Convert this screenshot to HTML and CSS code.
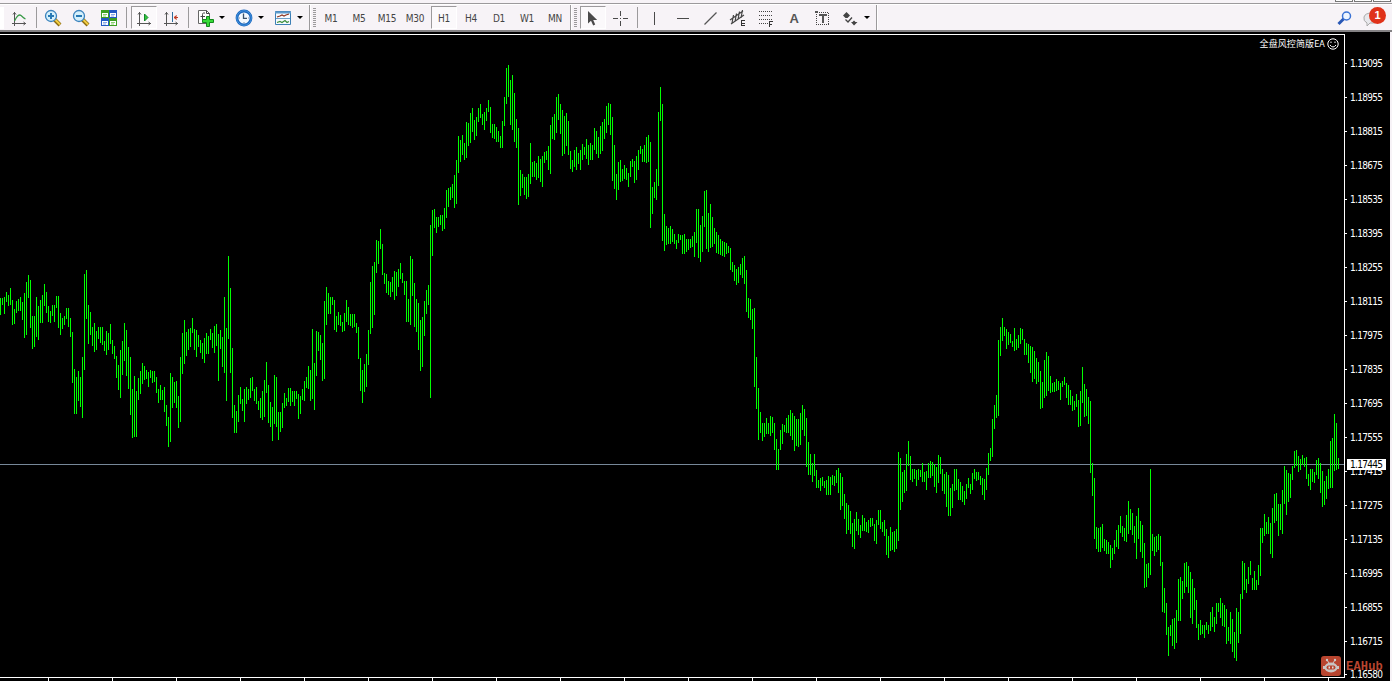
FILE: index.html
```
<!DOCTYPE html>
<html lang="zh-CN">
<head>
    <meta charset="UTF-8">
    <title>H1 Chart</title>
    <link rel="stylesheet" href="styles.css">
</head>
<body>
    <div class="window-strip"><i></i><i></i><i></i></div>
    <header class="toolbar">
        <div class="group group-charts">
            <span class="pressed-edge"></span>
            <button class="tool"><svg width="16" height="16" viewBox="0 0 16 16"><path class="axis" d="M3.500 2v14M1 13.500h14M2 4.500l1.500-2L5 4.500M12.500 12l2 1.500-2 1.500"/><path d="M3.500 11C6 6 8 4 10 5.500S13 8.500 14.500 9" fill="none" stroke="#3a9a48" stroke-width="1.300"/></svg></button>
            <span class="sep"></span>
            <button class="tool"><svg width="18" height="18" viewBox="0 0 18 18"><path d="M10.500 10.500l5.500 5.500" stroke="#8a6a10" stroke-width="4"/><path d="M10.500 10l5.500 5.500" stroke="#f3cd42" stroke-width="2"/><circle cx="7" cy="7" r="5.500" fill="#d5f0fc" stroke="#3b83bd" stroke-width="1.300"/><path d="M4 7h6M7 4v6" stroke="#2879b5" stroke-width="2"/></svg></button>
            <button class="tool"><svg width="18" height="18" viewBox="0 0 18 18"><path d="M10.500 10.500l5.500 5.500" stroke="#8a6a10" stroke-width="4"/><path d="M10.500 10l5.500 5.500" stroke="#f3cd42" stroke-width="2"/><circle cx="7" cy="7" r="5.500" fill="#d5f0fc" stroke="#3b83bd" stroke-width="1.300"/><path d="M4 7h6" stroke="#2879b5" stroke-width="2"/></svg></button>
            <button class="tool"><svg width="16" height="16" viewBox="0 0 16 16"><path fill="#3c9f22" d="M0 0h8v8H0zM8 8h8v8H8z"/><path fill="#2459c4" d="M8 0h8v8H8zM0 8h8v8H0z"/><path fill="#fff" d="M1 3h6v4H1zM9 3h6v4H9zM1 11h6v4H1zM9 11h6v4H9z"/><path stroke="#8bd06f" d="M2 4.500h4M2 6h3M10 12.500h4M10 14h3"/><path stroke="#89a9e8" d="M10 4.500h4M10 6h3M2 12.500h4M2 14h3"/></svg></button>
            <span class="sep"></span>
            <button class="tool pressed"><svg width="16" height="16" viewBox="0 0 16 16"><path class="axis" d="M3.500 2v14M1 13.500h14M2 4.500l1.500-2L5 4.500M12.500 12l2 1.500-2 1.500"/><path d="M8.500 4v7L12 7.500z" fill="#2fc83a" stroke="#14852a"/></svg></button>
            <button class="tool"><svg width="16" height="16" viewBox="0 0 16 16"><path class="axis" d="M3.500 2v14M1 13.500h14M2 4.500l1.500-2L5 4.500M12.500 12l2 1.500-2 1.500"/><path d="M9.500 2v10" stroke="#2d6c9c"/><path d="M11 7.500h4M13.500 5.500L11 7.500l2.500 2" stroke="#c23a22" fill="#c23a22"/></svg></button>
            <span class="sep"></span>
            <button class="tool menu"><svg width="18" height="18" viewBox="0 0 18 18"><path d="M2.500 1.500h8l3 3v10h-11z" fill="#fff" stroke="#666"/><path d="M10.500 1.500v3h3M9 4H7.500Q6.500 4 6.500 5.500V12M4.500 7.500H9" fill="none" stroke="#444"/><path d="M10.500 7.500h3v3h4v3h-4v4h-3v-4h-4v-3h4z" fill="#36da37" stroke="#13881d"/></svg></button>
            <button class="tool menu"><svg width="18" height="18" viewBox="0 0 18 18"><circle cx="9" cy="9" r="7" fill="#f4f9ff" stroke="#1c67bd" stroke-width="2.800"/><circle cx="9" cy="9" r="7.300" fill="none" stroke="#54a5ed" stroke-width=".7"/><path d="M8.500 4.500v4.800H12" fill="none" stroke="#3a526a" stroke-width="1.300"/><path d="M4 9h1M13 9h1M9 13v1" stroke="#8092a5"/></svg></button>
            <button class="tool menu"><svg width="18" height="16" viewBox="0 0 18 16"><path d="M1.500 1.500h15v13h-15z" fill="#f7fbff" stroke="#3d7fb5"/><path d="M1 2.500h16" stroke="#5c9acb" stroke-width="2"/><path d="M2 8.500h14" stroke="#6c9fc7"/><path d="M3 7l3-1 2-1 2 1 2-1 3-1" fill="none" stroke="#8c3521" stroke-width="1.200"/><path d="M3 12.500l3-1 2 1 3-2 2 2 2-1" fill="none" stroke="#3d8d3b" stroke-width="1.200"/></svg></button>
        </div>
        <div class="group group-periods">
            <span class="grip"></span>
            <button class="tool">M1</button>
            <button class="tool">M5</button>
            <button class="tool">M15</button>
            <button class="tool">M30</button>
            <button class="tool pressed">H1</button>
            <button class="tool">H4</button>
            <button class="tool">D1</button>
            <button class="tool">W1</button>
            <button class="tool">MN</button>
        </div>
        <div class="group group-drawing">
            <span class="grip"></span>
            <button class="tool pressed"><svg width="18" height="18" viewBox="0 0 18 18"><path d="M4 2v12.500l3-2.700 2.200 4.700 2-1-2-4.400h4z" fill="#4a4a4a"/></svg></button>
            <button class="tool"><svg class="crisp" width="16" height="16" viewBox="0 0 16 16"><path d="M7.500 1v5M7.500 11v5M0 8.500h5M10 8.500h5M7 8.500h1" stroke="#4a4a4a"/></svg></button>
            <span class="sep"></span>
            <button class="tool"><svg class="crisp" width="16" height="16" viewBox="0 0 16 16"><path d="M8.500 2v13" stroke="#4a4a4a"/></svg></button>
            <button class="tool"><svg class="crisp" width="16" height="16" viewBox="0 0 16 16"><path d="M3 8.500h12" stroke="#4a4a4a"/></svg></button>
            <button class="tool"><svg width="16" height="16" viewBox="0 0 16 16"><path d="M2.500 14.500l12-12" stroke="#555" stroke-width="1.200"/></svg></button>
            <button class="tool"><svg width="18" height="18" viewBox="0 0 18 18"><path d="M1 11L14 2M2 15L15 6M4.500 6L3 14M7.500 4.500L6 12.500M10.500 2.500L9 10.500M13.500 1L12 9" stroke="#444" stroke-width="1.200"/><path class="crisp" d="M16 11.500h-4M12.500 11v6M12 14.500h3.500M12 16.500h4" stroke="#333"/></svg></button>
            <button class="tool"><svg class="crisp" width="18" height="18" viewBox="0 0 18 18"><path d="M2 2.500h14M2 6.500h14M2 10.500h14M2 14.500h9" stroke="#444" stroke-dasharray="1 1"/><path d="M12.500 12v6M12 12.500h4M12 15.500h3" stroke="#333"/></svg></button>
            <button class="tool letter">A</button>
            <button class="tool"><svg class="crisp" width="16" height="16" viewBox="0 0 16 16"><path d="M2.500 2.500h12v12h-12z" fill="none" stroke="#444" stroke-dasharray="1 1"/><path d="M1 1h3v2H1zM5 4h8v2H10v7H8V6H5z" fill="#555"/></svg></button>
            <button class="tool menu"><svg width="18" height="18" viewBox="0 0 18 18"><path d="M2 6.500L5.500 3 9 6.500 6.500 9h-2zM10 13h6.500L13 16.500zM11.500 13l1.500-1.500 1.500 1.500z" fill="#444"/><path d="M4.500 10.500l2.500 2.500 4-4.500" fill="none" stroke="#444" stroke-width="1.300"/></svg></button>
        </div>
        <div class="toolbar-end">
            <svg width="16" height="16" viewBox="0 0 16 16"><path d="M1.500 14l5.500-5.500" stroke="#2857b5" stroke-width="3"/><circle cx="9.500" cy="6" r="4" fill="#eef5ff" stroke="#3a72d4" stroke-width="1.500"/></svg>
            <span class="chat">
                <svg width="18" height="16" viewBox="0 0 18 16"><path d="M4 13Q0 11 1 7T9 3t7 5-6 5H7l-3 3z" fill="#e8e8ec" stroke="#aaa"/></svg>
                <b class="badge">1</b>
            </span>
        </div>
    </header>

    <main class="workspace">
        <section class="chart">
            <svg id="bars" width="1344" height="642" viewBox="0 35 1344 642"></svg>
            <div class="expert">全盘风控简版EA
                <svg width="12" height="12" viewBox="0 0 12 12"><circle cx="6" cy="6" r="5.200"/><path d="M3 7q3 4 6 0M4 3.500v1.500M8 3.500v1.500"/></svg>
            </div>
        </section>
        <aside class="prices" id="prices">
            <div class="current-price">1.17445</div>
        </aside>
        <div class="times"></div>
        <div class="watermark">
            <svg width="20" height="20" viewBox="0 0 20 20"><rect width="20" height="20" rx="3" fill="#b8452f"/><path d="M6 4l2 3M14 4l-2 3" stroke="#ccc"/><circle cx="6" cy="4" r="1.200" fill="#ccc"/><circle cx="14" cy="4" r="1.200" fill="#ccc"/><ellipse cx="10" cy="11.500" rx="6.500" ry="5" fill="#c9c5c3"/><path d="M2 10h2v3H2zM16 10h2v3h-2z" fill="#c9c5c3"/><rect x="5.500" y="9.500" width="9" height="4" rx="2" fill="#b8452f"/><path d="M7.500 10.500h1.500v2H7.500zM11 10.500h1.500v2H11z" fill="#ddd"/></svg>
            <span>EAHub</span>
        </div>
    </main>
    <script src="chart.js"></script>
</body>
</html>
```
FILE: styles.css
```
* {
    box-sizing: border-box;
}

body {
    margin: 0;
    width: 1392px;
    height: 681px;
    overflow: hidden;
    background: #f7f3f7;
    font-family: "DejaVu Sans Condensed", "DejaVu Sans", "Noto Sans CJK SC", sans-serif;
    font-size: 10px;
}

.window-strip {
    display: flex;
    justify-content: flex-end;
    height: 4px;
    border-bottom: 1px solid #9c9a9c;
}

.window-strip i {
    width: 18px;
    height: 2px;
    margin-right: 1px;
    background: #fff;
    border: 1px solid #777;
    border-top: 0;
}

.toolbar {
    display: flex;
    height: 28px;
    border-top: 1px solid #fff;
    border-bottom: 2px solid #848284;
}

.group {
    display: flex;
    align-items: center;
    border-right: 1px solid #9c9a9c;
    box-shadow: 1px 0 #fff;
}

.group-charts {
    width: 310px;
}

.group-periods {
    width: 261px;
}

.group-drawing {
    width: 306px;
}

.pressed-edge {
    width: 4px;
    height: 22px;
    margin-right: 1px;
    background: #fff;
}

.tool {
    display: flex;
    flex: none;
    align-items: center;
    justify-content: center;
    width: 28px;
    height: 23px;
    padding: 0;
    border: 0;
    background: none;
    color: #444;
    font: inherit;
    letter-spacing: -0.3px;
}

.group-periods .tool {
    padding-top: 2px;
}

.tool.pressed {
    width: 26px;
    margin: 0 1px;
    border: 1px solid #fff;
    border-top-color: #9c9a9c;
    border-left-color: #9c9a9c;
    background: #fbf9fb;
}

.group-charts .tool.pressed {
    margin: 0 0 0 2px;
}

.group-periods .tool.pressed {
    margin: 0 0 0 2px;
}

.tool.menu {
    justify-content: flex-start;
    width: 39px;
    padding-left: 5px;
}

.tool.menu::after {
    content: "";
    margin-left: 5px;
    border: 3px solid transparent;
    border-top-color: #000;
    border-bottom: 0;
}

.tool.letter {
    padding-top: 1px;
    color: #555;
    font: bold 13px "Liberation Sans", sans-serif;
}

.axis {
    fill: none;
    stroke: #555;
}

.crisp {
    shape-rendering: crispEdges;
}

.sep {
    flex: none;
    width: 1px;
    height: 21px;
    margin: 0 2px;
    background: #9c9a9c;
}

.group-charts .sep {
    margin: 0 2px 0 3px;
}

.grip {
    flex: none;
    width: 3px;
    height: 19px;
    margin: 0 1px 0 3px;
    background: repeating-linear-gradient(#9c9a9c 0 1px, transparent 1px 2px);
}

.group-drawing .grip {
    margin-right: 2px;
}

.toolbar-end {
    display: flex;
    align-items: center;
    gap: 10px;
    margin-left: auto;
    padding-right: 9px;
}

.chat {
    position: relative;
    width: 20px;
    height: 16px;
}

.badge {
    position: absolute;
    top: -3px;
    right: -3px;
    width: 17px;
    height: 17px;
    border-radius: 50%;
    background: #e0321a;
    color: #fff;
    font: bold 11px/17px "Liberation Sans", sans-serif;
    text-align: center;
}

.workspace {
    position: relative;
    display: grid;
    grid-template-columns: 1345px 45px;
    grid-template-rows: 644px 3px;
    width: 1390px;
    height: 649px;
    padding-top: 2px;
    background: #000;
    color: #fff;
}

.chart {
    position: relative;
    border: 1px solid #fff;
    border-left: 0;
}

.chart svg {
    display: block;
}

.bar-path {
    fill: #0f0;
}

.price-line {
    fill: #778899;
}

.expert {
    position: absolute;
    top: 3px;
    right: 5px;
    display: flex;
    align-items: center;
    gap: 2px;
    height: 12px;
    font-size: 9px;
    line-height: 12px;
    letter-spacing: 0.1px;
    white-space: nowrap;
}

.expert svg {
    fill: none;
    stroke: #fff;
}

.prices {
    position: relative;
    height: 647px;
    padding-top: 12px;
    overflow: hidden;
    letter-spacing: -0.7px;
}

.price {
    display: flex;
    align-items: center;
    height: 34px;
    padding-top: 1px;
}

.price::before {
    content: "";
    width: 2px;
    height: 1px;
    margin-right: 3px;
    background: #fff;
}

.price:last-child {
    margin-top: -1px;
}

.current-price {
    position: absolute;
    top: 425px;
    left: 2px;
    width: 39px;
    height: 11px;
    padding-left: 3px;
    background: #fff;
    color: #000;
    line-height: 11px;
}

.times {
    background: repeating-linear-gradient(90deg, transparent 0 48px, #fff 48px 49px, transparent 49px 64px);
}

.watermark {
    position: absolute;
    left: 1321px;
    top: 624px;
    display: flex;
    align-items: center;
    gap: 5px;
    color: #b8452f;
    font: bold 12px "Liberation Mono", monospace;
}

.watermark span {
    padding-top: 2px;
    letter-spacing: 0.2px;
}
```
FILE: chart.js
```
// high and low of every bar, in chart pixels
const bars = `
298-315 298-305 297-314 292-302 295-306 288-305 300-325 309-324 301-313 299-311
297-311 302-320 293-338 282-335 275-298 280-328 316-349 316-347 297-337 306-340
300-323 295-323 284-306 292-313 306-322 311-323 305-316 305-322 296-308 296-328
313-335 318-329 316-325 308-319 308-327 318-337 332-383 369-414 377-414 371-401
377-407 357-418 274-370 270-319 305-344 312-335 327-346 323-352 331-350 327-339
327-343 327-345 341-351 331-355 333-350 324-344 340-354 346-359 356-378 365-390
350-398 341-375 323-361 330-376 347-389 357-415 389-438 376-437 391-437 378-400
371-394 363-384 366-380 370-379 372-387 370-378 371-383 371-382 377-393 389-403
385-400 390-400 387-412 405-426 417-447 373-442 377-408 382-403 381-408 396-428
357-422 333-374 320-364 332-356 329-350 328-347 318-333 329-350 330-357 335-347
340-353 343-359 338-363 333-354 336-354 329-340 333-348 326-353 324-346 334-381
330-349 337-367 297-373 328-401 256-339 288-373 348-418 405-433 411-433 395-422
387-404 399-411 389-422 387-404 389-400 378-398 377-391 389-401 387-404 401-410
398-418 391-420 380-417 362-393 385-423 402-427 407-441 375-424 377-427 412-440
412-432 403-428 393-408 398-406 388-402 388-406 391-402 391-406 391-399 394-419
396-414 389-400 381-401 377-388 366-389 370-401 329-399 363-410 331-376 332-351
335-360 343-381 301-379 287-325 293-314 297-314 297-305 300-330 316-332 312-325
315-326 322-332 313-331 300-322 307-325 314-326 314-328 314-327 323-333 327-359
358-391 370-403 364-392 354-387 330-365 282-334 266-328 262-315 240-273 241-264
229-249 244-275 273-284 274-293 281-295 282-297 277-292 271-300 272-296 269-287
263-279 273-283 281-295 281-322 299-322 256-325 259-296 283-327 299-332 303-350
320-371 317-367 301-336 290-314 285-305 225-398 210-256 209-228 217-233 217-227
215-225 215-231 208-229 190-218 188-207 187-200 184-198 175-208 160-204 136-173
140-162 135-155 143-160 122-158 123-146 113-143 108-132 120-140 117-136 108-122
104-118 114-125 112-130 108-121 100-112 107-133 124-138 124-139 127-142 131-142
136-148 121-148 97-126 68-104 65-97 80-125 75-130 93-142 119-148 128-205
170-196 174-188 177-195 177-199 174-197 143-184 162-177 161-177 163-180 156-178
159-182 156-187 152-163 151-160 146-170 125-174 117-139 114-140 97-133 94-120
104-134 110-156 116-154 113-146 121-155 151-169 160-172 150-167 147-170 153-164
150-170 144-160 147-155 139-159 145-165 143-160 145-160 128-150 131-154 137-158
126-154 122-151 119-139 106-133 103-125 104-135 117-181 145-189 174-200 162-190
160-182 169-181 165-179 168-180 173-187 161-177 159-167 161-183 156-180 150-170
146-154 149-162 145-162 137-163 135-162 142-228 187-214 182-198 169-200 112-186
87-121 104-241 214-251 226-245 228-244 226-244 229-242 234-244 240-249 234-243
235-240 235-254 234-254 239-252 239-250 239-248 236-247 232-257 209-243 209-258
225-262 216-252 191-227 190-249 213-252 204-248 217-247 228-244 232-253 235-254
239-255 241-256 242-257 243-254 246-253 248-270 262-272 265-281 269-285 267-283
264-275 258-278 256-284 270-312 298-318 299-320 309-329 308-387 357-409 388-440
412-433 423-441 423-437 418-434 423-434 416-436 417-433 423-450 439-470 449-470
430-450 424-444 425-432 418-433 415-433 410-436 413-440 416-451 419-446 419-447
413-445 405-430 409-436 418-467 442-475 454-475 463-482 454-476 470-488 480-488
478-491 477-486 481-488 480-495 476-495 477-495 475-485 476-486 470-483 468-493
473-510 477-506 494-519 503-534 505-530 511-534 523-547 519-549 512-531 519-535
525-538 515-531 518-531 522-532 520-533 518-527 518-526 524-541 520-544 510-525
510-529 522-532 520-536 529-555 536-558 527-551 532-550 531-552 529-549 452-541
458-510 472-502 470-493 454-491 441-466 456-480 469-482 469-479 470-486 469-480
470-477 463-482 472-482 471-490 463-478 461-478 462-476 464-487 467-493 455-483
457-474 469-491 474-494 472-507 475-516 488-516 484-508 469-491 469-490 479-500
482-500 486-502 491-505 484-499 478-488 484-494 473-490 469-479 472-481 472-480
476-485 478-495 479-500 468-490 453-475 448-461 419-457 405-429 395-418 340-416
327-356 318-341 327-336 329-349 332-345 334-343 341-347 328-351 339-350 335-348
328-344 329-340 339-355 343-355 344-363 346-373 347-382 351-379 358-384 362-382
371-409 382-408 360-398 352-396 356-391 376-393 383-392 382-392 379-391 381-390
383-400 381-387 377-385 383-398 385-405 390-405 396-411 401-410 394-407 400-427
391-426 367-403 384-417 389-416 397-424 401-473 463-496 478-539 527-549 528-552
527-552 524-548 539-551 540-554 542-554 545-568 548-560 540-554 530-547 525-549
516-533 526-537 528-541 515-542 501-534 509-530 513-535 526-543 516-559 508-539
521-552 525-558 543-588 564-587 563-578 469-575 534-551 537-556 536-552 534-550
536-566 562-612 588-613 603-635 627-656 625-636 619-646 618-649 610-643 579-621
577-621 581-599 563-593 562-587 566-593 572-618 579-624 588-610 600-628 624-640
620-635 625-634 625-638 622-630 625-634 612-631 607-627 617-632 603-624 603-612
598-618 603-626 605-627 609-644 627-641 612-644 619-652 632-658 608-661 612-643
594-634 561-599 563-590 579-593 567-584 561-575 578-590 571-590 580-590 565-585
528-576 528-543 514-536 522-534 517-534 523-554 508-558 494-523 493-521 504-536
504-530 490-534 466-504 470-515 473-502 474-498 466-480 451-468 450-466 456-472
459-470 455-465 458-467 457-479 474-486 469-490 469-482 472-483 460-475 458-479
463-493 471-507 481-505 476-499 469-489 441-488 438-488 414-471 423-470 458-469
`.trim().split(/\s+/);

const path = bars.map((bar, i) => {
    const [high, low] = bar.split('-').map(Number);
    return `M${i * 2} ${high}h1V${low}h-1z`;
}).join('');

document.getElementById('bars').innerHTML =
    '<rect class="price-line" x="0" y="464" width="1344" height="1"/>' +
    `<path class="bar-path" d="${path}"/>`;

// price scale
const prices = document.getElementById('prices');
const levels = [];
for (let i = 0; i < 18; i++) {
    levels.push(1.19095 - i * 0.0014);
}
levels.push(1.1658);

levels.forEach(level => {
    const row = document.createElement('div');
    row.className = 'price';
    row.textContent = level.toFixed(5);
    prices.appendChild(row);
});
```
